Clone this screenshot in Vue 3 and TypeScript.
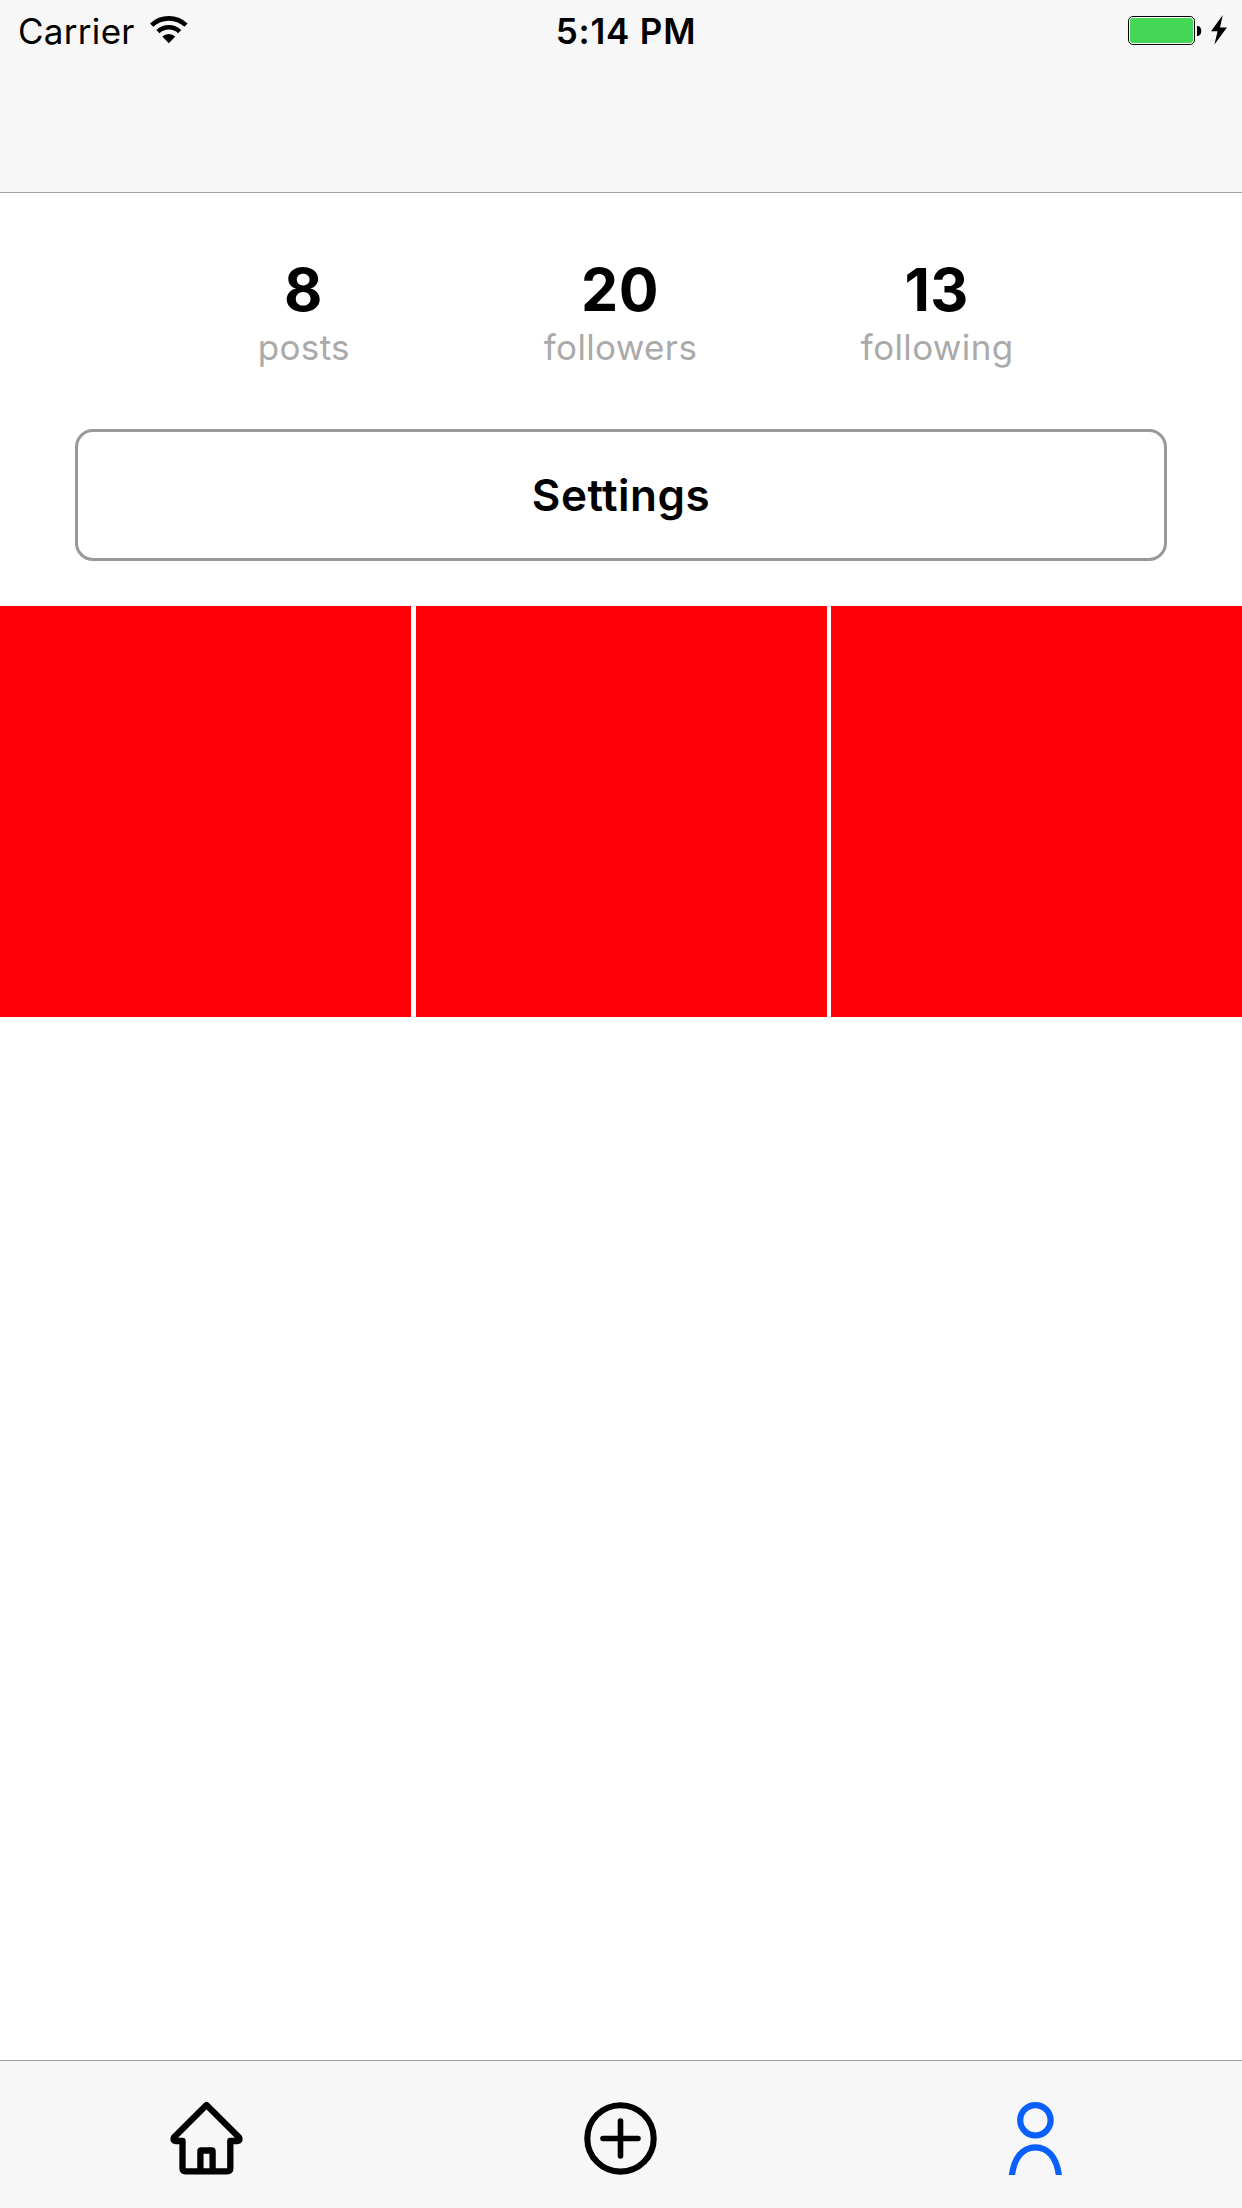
<script setup lang="ts">
interface Stat {
  value: number
  label: string
}

const stats: Stat[] = [
  { value: 8, label: 'posts' },
  { value: 20, label: 'followers' },
  { value: 13, label: 'following' },
]

const photos: number[] = [1, 2, 3]
</script>

<template>
  <div class="screen">
    <header class="navbar">
      <div class="status">
        <div class="status-left">
          <span class="carrier">Carrier</span>
          <svg class="wifi" width="38" height="28" viewBox="0 0 38 28">
            <g fill="none" stroke="#000" stroke-width="4.6">
              <path d="M1.6 9.2A25 25 0 0 1 36 9.2" />
              <path d="M7.9 15.6A16 16 0 0 1 29.7 15.6" />
            </g>
            <path d="M18.8 27.3L12.3 20.6A9.3 9.3 0 0 1 25.3 20.6Z" />
          </svg>
        </div>
        <span class="time">5:14 PM</span>
        <div class="status-right">
          <svg width="100" height="31" viewBox="0 0 100 31">
            <rect x=".5" y="1.5" width="66" height="28" rx="4.5" fill="#fff" stroke="#000" />
            <rect x="2" y="3" width="63" height="25" rx="3" fill="#46d656" />
            <path d="M69 11h.8a3.5 5 0 0 1 0 10H69z" />
            <path d="M94.8 0L83 16.2h6.6L86.4 29.5L99 12.5h-7z" />
          </svg>
        </div>
      </div>
    </header>

    <main class="profile">
      <section class="stats">
        <div v-for="stat in stats" :key="stat.label" class="stat">
          <span class="value">{{ stat.value }}</span>
          <span class="label">{{ stat.label }}</span>
        </div>
      </section>
      <button class="settings" type="button">Settings</button>
      <section class="photos">
        <div v-for="photo in photos" :key="photo" class="photo"></div>
      </section>
    </main>

    <nav class="tabbar">
      <a class="tab">
        <svg width="74" height="74" viewBox="0 0 74 74" fill="none" stroke="currentColor" stroke-width="6.3" stroke-linejoin="round">
          <path d="M36.5 4L3.9 36.6Q2.6 40 5.8 40H12.5V67.3Q12.5 70.3 15.5 70.3H57.3Q60.3 70.3 60.3 67.3V40H67.2Q70.4 40 69.1 36.6Z" stroke-linejoin="round" />
          <path d="M30.4 70V50.3Q30.4 49.5 31.2 49.5H41.8Q42.6 49.5 42.6 50.3V70" />
        </svg>
      </a>
      <a class="tab">
        <svg width="74" height="74" viewBox="0 0 74 74" fill="none" stroke="currentColor" stroke-width="6.1">
          <circle cx="36.5" cy="37.4" r="33.2" />
          <path d="M36.5 20v35M19 37.5h35" stroke-width="5.6" stroke-linecap="round" />
        </svg>
      </a>
      <a class="tab active">
        <svg width="74" height="74" viewBox="0 0 74 74" fill="none" stroke="currentColor" stroke-width="6.2">
          <circle cx="37.4" cy="19.3" r="15.2" />
          <path d="M13.7 76C15.7 56.5 25 46.3 37.4 46.3S59.1 56.5 61.1 76" />
        </svg>
      </a>
    </nav>
  </div>
</template>

<style>
body {
  margin: 0;
}
</style>

<style scoped>
.screen {
  width: 1242px;
  height: 2208px;
  display: flex;
  flex-direction: column;
  background: #fff;
  color: #000;
  font-family: Inter, 'Liberation Sans', sans-serif;
}

.navbar {
  height: 192px;
  background: #f7f7f7;
  border-bottom: 1px solid #a0a0a0;
}

.status {
  height: 62px;
  display: grid;
  grid-template-columns: 1fr auto 1fr;
  font-size: 35px;
  line-height: 62px;
}

.status-left {
  display: flex;
  align-items: flex-start;
  padding-left: 18px;
}

.carrier {
  width: 131.5px;
  letter-spacing: 0.3px;
}

.wifi {
  margin-top: 16px;
}

.time {
  padding-left: 10px;
  font-weight: 580;
  letter-spacing: 0.8px;
}

.status-right {
  display: flex;
  justify-content: flex-end;
  padding: 15px 14px 0 0;
}

.profile {
  flex: 1;
}

.stats {
  display: flex;
  width: 950px;
  margin: 0 0 0 145px;
  padding-top: 61px;
}

.stat {
  flex: 1;
  display: flex;
  flex-direction: column;
  align-items: center;
}

.value {
  font-size: 59px;
  font-weight: 700;
  font-kerning: none;
  letter-spacing: 0.5px;
  line-height: 71px;
}

.label {
  padding-left: 1px;
  font-size: 35px;
  line-height: 44px;
  letter-spacing: 0.35px;
  color: #aaa;
}

.settings {
  display: block;
  width: 1092px;
  height: 132px;
  margin: 60px 0 45px 75px;
  padding: 0;
  border: 3px solid #999;
  border-radius: 18px;
  background: #fff;
  color: #000;
  font: 600 44px/126px Inter, 'Liberation Sans', sans-serif;
  letter-spacing: 0.5px;
}

.photos {
  display: grid;
  grid-template-columns: 411px 411px 411px;
  justify-content: space-between;
}

.photo {
  height: 411px;
  background: #ff0006;
}

.tabbar {
  height: 147px;
  display: flex;
  background: #f7f7f7;
  border-top: 1px solid #a0a0a0;
}

.tab {
  flex: 1;
  display: flex;
  justify-content: center;
  padding-top: 40px;
}

.tab.active {
  color: #0a60ff;
}
</style>
